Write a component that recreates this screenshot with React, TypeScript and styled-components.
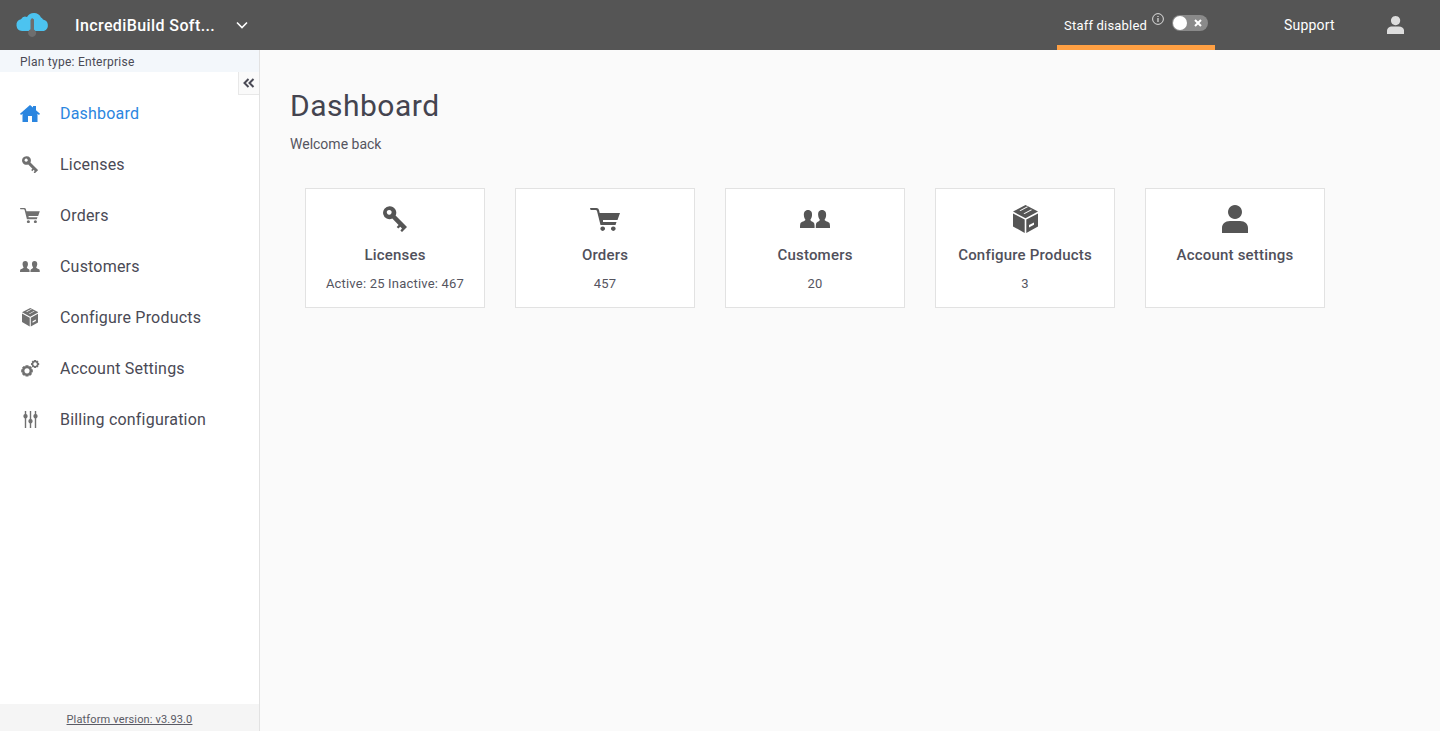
import React from 'react';
import styled, { createGlobalStyle } from 'styled-components';

const GlobalStyle = createGlobalStyle`
  html, body { margin: 0; padding: 0; height: 100%; }
  body {
    font-family: 'Roboto', 'Liberation Sans', sans-serif;
    background: #fafafa;
    color: #4a4a55;
  }
`;

const Page = styled.div`
  display: flex;
  flex-direction: column;
  height: 731px;
  overflow: hidden;
`;

// Header
const Header = styled.header`
  display: flex;
  align-items: stretch;
  height: 50px;
  flex-shrink: 0;
  background: #555555;
  color: #ffffff;
`;

const Brand = styled.div`
  display: flex;
  align-items: center;
  width: 260px;
  padding-left: 16px;
  box-sizing: border-box;
`;

const Logo = styled.svg`
  width: 34px;
  height: 26px;
  flex-shrink: 0;
`;

const CompanyName = styled.span`
  margin-left: 25px;
  width: 161px;
  font-size: 16px;
  font-weight: 500;
  letter-spacing: 0.4px;
  white-space: nowrap;
`;

const Chevron = styled.svg`
  width: 12px;
  height: 8px;
`;

const HeaderRight = styled.div`
  display: flex;
  align-items: stretch;
  margin-left: auto;
  padding-right: 36px;
`;

const StaffTab = styled.div`
  display: flex;
  align-items: center;
  width: 158px;
  box-sizing: border-box;
  padding: 0 7px;
  border-bottom: 5px solid #ffa043;
  font-size: 13px;
`;

const StaffLabel = styled.span`
  padding-top: 5px;
  letter-spacing: 0.2px;
  white-space: nowrap;
`;

const InfoIcon = styled.svg`
  width: 12px;
  height: 12px;
  margin: -7px 0 0 5px;
`;

const Toggle = styled.div`
  display: flex;
  align-items: center;
  justify-content: space-between;
  width: 36px;
  height: 16px;
  margin-left: 8px;
  padding: 0 6px 0 1px;
  box-sizing: border-box;
  border-radius: 8px;
  background: #8a8a8a;
`;

const ToggleKnob = styled.span`
  width: 14px;
  height: 14px;
  border-radius: 50%;
  background: #ffffff;
`;

const ToggleCross = styled.svg`
  width: 8px;
  height: 8px;
`;

const SupportLink = styled.span`
  display: flex;
  align-items: center;
  margin-left: 69px;
  font-size: 14px;
  letter-spacing: 0.2px;
`;

const AvatarSlot = styled.span`
  display: flex;
  align-items: center;
  margin-left: 52px;
  color: #dddddd;
`;

// Body
const Body = styled.div`
  display: flex;
  flex: 1;
  min-height: 0;
`;

const Sidebar = styled.aside`
  position: relative;
  display: flex;
  flex-direction: column;
  width: 260px;
  flex-shrink: 0;
  box-sizing: border-box;
  background: #ffffff;
  border-right: 1px solid #e2e2e2;
`;

const PlanType = styled.div`
  height: 22px;
  padding-left: 20px;
  background: #f3f7fb;
  font-size: 12px;
  line-height: 25px;
  letter-spacing: 0.25px;
`;

const CollapseButton = styled.button`
  position: absolute;
  top: 22px;
  right: 0;
  display: flex;
  align-items: center;
  justify-content: center;
  width: 21px;
  height: 23px;
  padding: 0;
  background: #fafafa;
  border: 0;
  border-left: 1px solid #e8e8e8;
  border-bottom: 1px solid #e8e8e8;
  color: #4a4a55;
`;

const Nav = styled.nav`
  display: flex;
  flex-direction: column;
  padding-top: 16px;
`;

const NavItem = styled.a<{ $active?: boolean }>`
  display: flex;
  align-items: center;
  height: 51px;
  padding-left: 20px;
  font-size: 16px;
  letter-spacing: 0.2px;
  color: ${p => (p.$active ? '#2b86e0' : '#4a4a55')};
`;

const NavIconSlot = styled.span<{ $active?: boolean }>`
  display: flex;
  align-items: center;
  justify-content: center;
  width: 20px;
  margin-right: 20px;
  color: ${p => (p.$active ? '#2b86e0' : '#707070')};
`;

const SidebarFooter = styled.div`
  margin-top: auto;
  height: 27px;
  background: #f5f5f5;
  text-align: center;
  font-size: 11px;
  line-height: 32px;
  letter-spacing: 0.15px;
  color: #5a5a64;
  text-decoration: underline;
`;

// Main
const Main = styled.main`
  flex: 1;
  padding: 36px 30px 0;
  background: #fafafa;
`;

const Title = styled.h1`
  margin: 0;
  font-size: 30px;
  line-height: 40px;
  font-weight: 400;
  letter-spacing: 0.5px;
  color: #44444f;
`;

const Welcome = styled.p`
  margin: 8px 0 0;
  font-size: 14px;
  line-height: 20px;
  color: #55555f;
`;

const CardRow = styled.div`
  display: flex;
  gap: 30px;
  margin: 34px 0 0 15px;
`;

const Card = styled.div`
  display: flex;
  flex-direction: column;
  align-items: center;
  width: 180px;
  height: 120px;
  box-sizing: border-box;
  padding-top: 15px;
  background: #ffffff;
  border: 1px solid #e2e2e2;
`;

const CardIconSlot = styled.div`
  display: flex;
  align-items: center;
  justify-content: center;
  height: 30px;
  color: #555555;
`;

const CardTitle = styled.div`
  margin-top: 11px;
  font-size: 15px;
  line-height: 20px;
  font-weight: 500;
  letter-spacing: 0.2px;
  color: #50505b;
`;

const CardValue = styled.div`
  margin-top: 10px;
  font-size: 13px;
  line-height: 18px;
  letter-spacing: 0.2px;
  color: #55555f;
`;

type IconName = 'home' | 'key' | 'cart' | 'users' | 'box' | 'cogs' | 'sliders' | 'user';

const ICONS: Record<IconName, { w: number; h: number; d: string }> = {
  home: {
    w: 20,
    h: 17,
    d: 'M10 0 L13 2.6 V1 H16 V5.2 L20 8.8 L19 10 L17.5 8.8 V17 H12 V11 H8 V17 H2.5 V8.8 L1 10 L0 8.8 Z',
  },
  key: {
    w: 24,
    h: 26,
    d: 'M6.5 0.2 A6.5 6.5 0 0 1 12.6 9.6 L24 21 L19 26 L17.4 24.4 L19 22.4 L17.3 20.7 L15.3 22.6 L13.7 21 L15.6 19 L9.3 12.6 A6.5 6.5 0 1 1 6.5 0.2 Z M6.2 3.9 A2.4 2.4 0 1 0 6.21 3.9 Z',
  },
  cart: {
    w: 30,
    h: 23,
    d: 'M0 0 H6.5 Q8.5 0 9 2 L9.7 5 H30 L27.5 12 H13 V14 H26.5 L25.5 17 H10.5 L7 3 Q6.7 2 5.6 2 H0.6 Z M12.7 18.4 A2.3 2.3 0 1 1 12.69 18.4 Z M23.3 18.4 A2.3 2.3 0 1 1 23.29 18.4 Z',
  },
  users: {
    w: 30,
    h: 18,
    d: 'M8 0 C11 0 12.4 2.4 12 5.4 C11.8 7.4 11 8.8 10.4 9.6 C10.2 11 12.4 11.6 13.6 12.6 C14.6 13.4 14.6 15.8 14.6 18 H0 C0 15.8 0 13.4 1 12.6 C2.4 11.6 5.6 11 5.4 9.6 C4.8 8.8 4.1 7.4 3.9 5.4 C3.6 2.4 5 0 8 0 Z M22 0 C25 0 26.4 2.4 26.1 5.4 C25.9 7.4 25.2 8.8 24.6 9.6 C24.4 11 27.6 11.6 29 12.6 C30 13.4 30 15.8 30 18 H15.8 C15.8 15.8 15.8 13.4 16.8 12.6 C18 11.6 20 11 19.8 9.6 C19.2 8.8 18.4 7.4 18.2 5.4 C17.8 2.4 19 0 22 0 Z',
  },
  box: {
    w: 25,
    h: 28,
    d: 'M12.5 0 L25 6.6 L12.5 13.2 L0 6.6 Z M6.5 5.4 L14 1.4 L15 1.9 L7.5 5.9 Z M10.5 8.6 L18 4.6 L19 5.1 L11.5 9.1 Z M0 8.4 L11.7 14.6 V28 L0 21.4 Z M25 8.4 V21.4 L13.3 28 V14.6 Z M16 20 L21 17.4 V19.8 L16 22.4 Z',
  },
  cogs: {
    w: 20,
    h: 17,
    d: 'M5.6 5.2 H8.4 L8.8 6.6 L10.2 6 L12 7.8 L11.3 9.1 L12.8 9.6 V12.2 L11.3 12.7 L12 14 L10.2 15.8 L8.8 15.2 L8.4 16.6 H5.6 L5.2 15.2 L3.8 15.8 L2 14 L2.7 12.7 L1.2 12.2 V9.6 L2.7 9.1 L2 7.8 L3.8 6 L5.2 6.6 Z M7 8.3 A2.6 2.6 0 1 0 7.01 8.3 Z M14.2 0 H16 L16.3 1 L17.3 .6 L18.5 1.8 L18 2.8 L19.2 3.2 V4.9 L18 5.3 L18.5 6.3 L17.3 7.5 L16.3 7 L16 8.1 H14.2 L13.9 7 L12.9 7.5 L11.7 6.3 L12.2 5.3 L11 4.9 V3.2 L12.2 2.8 L11.7 1.8 L12.9 .6 L13.9 1 Z M15.1 2.3 A1.8 1.8 0 1 0 15.11 2.3 Z',
  },
  sliders: {
    w: 15,
    h: 17,
    d: 'M1.8 0 H3.2 V3 A2.4 2.4 0 0 1 3.2 7.4 V17 H1.8 V7.4 A2.4 2.4 0 0 1 1.8 3 Z M6.8 0 H8.2 V8 A2.4 2.4 0 0 1 8.2 12.4 V17 H6.8 V12.4 A2.4 2.4 0 0 1 6.8 8 Z M11.8 0 H13.2 V3 A2.4 2.4 0 0 1 13.2 7.4 V17 H11.8 V7.4 A2.4 2.4 0 0 1 11.8 3 Z',
  },
  user: {
    w: 26,
    h: 28,
    d: 'M13 0 A7 7 0 1 1 12.99 0 Z M8 16 H18 C23 16 26 19 26 23 V28 H0 V23 C0 19 3 16 8 16 Z',
  },
};

const Icon: React.FC<{ name: IconName; scale?: number }> = ({ name, scale = 1 }) => {
  const icon = ICONS[name];
  return (
    <svg
      width={icon.w * scale}
      height={icon.h * scale}
      viewBox={`0 0 ${icon.w} ${icon.h}`}
      fill="currentColor"
      fillRule="evenodd"
    >
      <path d={icon.d} />
    </svg>
  );
};

const NAV_ITEMS: { label: string; icon: IconName; scale: number; active?: boolean }[] = [
  { label: 'Dashboard', icon: 'home', scale: 1, active: true },
  { label: 'Licenses', icon: 'key', scale: 0.67 },
  { label: 'Orders', icon: 'cart', scale: 0.66 },
  { label: 'Customers', icon: 'users', scale: 0.66 },
  { label: 'Configure Products', icon: 'box', scale: 0.66 },
  { label: 'Account Settings', icon: 'cogs', scale: 1 },
  { label: 'Billing configuration', icon: 'sliders', scale: 1 },
];

const CARDS: { title: string; value: string; icon: IconName }[] = [
  { title: 'Licenses', value: 'Active: 25 Inactive: 467', icon: 'key' },
  { title: 'Orders', value: '457', icon: 'cart' },
  { title: 'Customers', value: '20', icon: 'users' },
  { title: 'Configure Products', value: '3', icon: 'box' },
  { title: 'Account settings', value: '', icon: 'user' },
];

const App: React.FC = () => (
  <Page>
    <GlobalStyle />
    <Header>
      <Brand>
        <Logo viewBox="0 0 34 26">
          <path
            fill="#4cc3f0"
            d="M6 19 A6 6 0 0 1 5 7.2 A5 5 0 0 1 11 5 A8 8 0 0 1 25 5.5 A5 5 0 0 1 27 7.5 A6 6 0 0 1 28 19 Z"
          />
          <path fill="#6e6e6e" d="M16 6 L18 7.5 V17.4 A4 4 0 1 1 14.5 17.3 V8 Z" />
        </Logo>
        <CompanyName>IncrediBuild Soft...</CompanyName>
        <Chevron viewBox="0 0 12 8">
          <path d="M1 1.5 L6 6.5 L11 1.5" fill="none" stroke="#ffffff" strokeWidth="1.6" />
        </Chevron>
      </Brand>
      <HeaderRight>
        <StaffTab>
          <StaffLabel>Staff disabled</StaffLabel>
          <InfoIcon viewBox="0 0 12 12">
            <circle cx="6" cy="6" r="5.4" fill="none" stroke="#ffffff" strokeWidth="0.8" />
            <path d="M6 5 V9 M6 3 V4" stroke="#ffffff" strokeWidth="1" />
          </InfoIcon>
          <Toggle>
            <ToggleKnob />
            <ToggleCross viewBox="0 0 8 8">
              <path d="M1 1 L7 7 M7 1 L1 7" stroke="#ffffff" strokeWidth="2" />
            </ToggleCross>
          </Toggle>
        </StaffTab>
        <SupportLink>Support</SupportLink>
        <AvatarSlot>
          <Icon name="user" scale={0.66} />
        </AvatarSlot>
      </HeaderRight>
    </Header>
    <Body>
      <Sidebar>
        <PlanType>Plan type: Enterprise</PlanType>
        <CollapseButton aria-label="Collapse">
          <svg width="12" height="10" viewBox="0 0 12 10">
            <path d="M5.5 1 L1.5 5 L5.5 9 M10.5 1 L6.5 5 L10.5 9" fill="none" stroke="currentColor" strokeWidth="2" />
          </svg>
        </CollapseButton>
        <Nav>
          {NAV_ITEMS.map(item => (
            <NavItem key={item.label} $active={item.active}>
              <NavIconSlot $active={item.active}>
                <Icon name={item.icon} scale={item.scale} />
              </NavIconSlot>
              {item.label}
            </NavItem>
          ))}
        </Nav>
        <SidebarFooter>Platform version: v3.93.0</SidebarFooter>
      </Sidebar>
      <Main>
        <Title>Dashboard</Title>
        <Welcome>Welcome back</Welcome>
        <CardRow>
          {CARDS.map(card => (
            <Card key={card.title}>
              <CardIconSlot>
                <Icon name={card.icon} />
              </CardIconSlot>
              <CardTitle>{card.title}</CardTitle>
              {card.value && <CardValue>{card.value}</CardValue>}
            </Card>
          ))}
        </CardRow>
      </Main>
    </Body>
  </Page>
);

export default App;
